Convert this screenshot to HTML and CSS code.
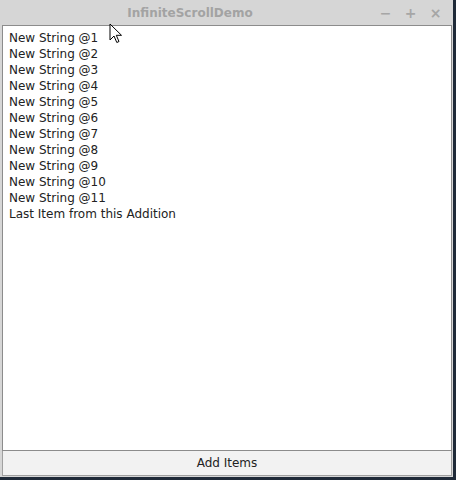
FILE: index.html
```html
<!DOCTYPE html>
<html>
<head>
<title>InfiniteScrollDemo</title>
<link rel="stylesheet" href="styles.css">
</head>
<body>
<div class="window">
  <div class="titlebar">
    <div class="title">InfiniteScrollDemo</div>
    <div class="controls">
      <span class="ctl">&minus;</span>
      <span class="ctl">+</span>
      <span class="ctl">&times;</span>
    </div>
  </div>
  <div class="content">
    <ul class="list">
      <li>New String @1</li>
      <li>New String @2</li>
      <li>New String @3</li>
      <li>New String @4</li>
      <li>New String @5</li>
      <li>New String @6</li>
      <li>New String @7</li>
      <li>New String @8</li>
      <li>New String @9</li>
      <li>New String @10</li>
      <li>New String @11</li>
      <li>Last Item from this Addition</li>
    </ul>
    <button class="add">Add Items</button>
  </div>
</div>
<svg class="cursor" width="14" height="22" viewBox="0 0 14 22">
  <path d="M1 1 L1 17 L5 13 L7.8 19.5 L10 18.5 L7.3 12.3 L12.5 12.3 Z" fill="#fff" stroke="#000" stroke-width="1"/>
</svg>
</body>
</html>
```

FILE: styles.css
```css
body {
  margin: 0;
  width: 456px;
  height: 480px;
  background: #1f2a38;
  font-family: "DejaVu Sans", sans-serif;
  position: relative;
  overflow: hidden;
}
.window {
  width: 453px;
  height: 477px;
  background: #d6d6d6;
  display: flex;
  flex-direction: column;
}
.titlebar {
  height: 25px;
  display: flex;
  align-items: center;
}
.title {
  width: 380px;
  text-align: center;
  font-size: 12px;
  font-weight: bold;
  color: #a3a3a3;
}
.controls {
  display: flex;
  gap: 10px;
  margin-left: -2px;
}
.ctl {
  width: 15px;
  text-align: center;
  color: #a6a6a6;
  font-size: 14px;
  font-weight: bold;
}
.content {
  margin: 0 1px 0 2px;
  display: flex;
  flex-direction: column;
  flex: 1;
}
.list {
  list-style: none;
  margin: 0;
  padding: 4px 0 0 6px;
  height: 420px;
  background: #fff;
  border: 1px solid #8c8c8c;
  font-size: 12px;
  color: #222;
}
.list li {
  height: 16px;
  line-height: 16px;
}
.add {
  height: 25px;
  margin: 0;
  border: 1px solid #a0a0a0;
  border-top: none;
  background: #f2f2f2;
  font-family: "DejaVu Sans", sans-serif;
  font-size: 12px;
  color: #222;
  padding: 0;
}
.cursor {
  position: absolute;
  left: 109px;
  top: 23px;
}
```
